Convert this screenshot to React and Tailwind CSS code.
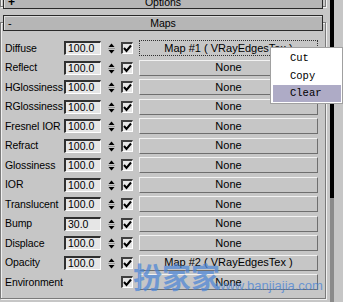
const rows = [
  { label: 'Diffuse', val: '100.0', map: 'Map #1 ( VRayEdgesTex )', focus: true },
  { label: 'Reflect', val: '100.0', map: 'None' },
  { label: 'HGlossiness', val: '100.0', map: 'None' },
  { label: 'RGlossiness', val: '100.0', map: 'None' },
  { label: 'Fresnel IOR', val: '100.0', map: 'None' },
  { label: 'Refract', val: '100.0', map: 'None' },
  { label: 'Glossiness', val: '100.0', map: 'None' },
  { label: 'IOR', val: '100.0', map: 'None' },
  { label: 'Translucent', val: '100.0', map: 'None' },
  { label: 'Bump', val: '30.0', map: 'None' },
  { label: 'Displace', val: '100.0', map: 'None' },
  { label: 'Opacity', val: '100.0', map: 'Map #2 ( VRayEdgesTex )' },
  { label: 'Environment', val: null, map: 'None' },
];

function Spinner() {
  return (
    <svg className="ml-[6px] w-[9px] h-[14px] shrink-0" viewBox="0 0 9 14">
      <path d="M1.5 6 L4.5 2.5 L7.5 6 Z" fill="#000" />
      <line x1="1" y1="7.5" x2="8" y2="7.5" stroke="#9a9a9a" strokeWidth="1" />
      <path d="M1.5 9 L7.5 9 L4.5 12.5 Z" fill="#000" />
    </svg>
  );
}

function Check() {
  return (
    <div className="ml-[5px] w-[12px] h-[12px] shrink-0 bg-[#e6e6e6] border-t-[2px] border-l-[2px] border-t-[#404040] border-l-[#404040] border-b border-r border-b-white border-r-white flex items-center justify-center">
      <svg className="w-[9px] h-[9px]" viewBox="0 0 9 9">
        <path d="M1 4 L3.5 7 L8 1.5" fill="none" stroke="#000" strokeWidth="2" />
      </svg>
    </div>
  );
}

function Row({ r }) {
  return (
    <div className="h-[19.5px] flex items-center pl-[4px]">
      <span className="w-[59px] shrink-0 text-[10.5px] tracking-[-0.1px] leading-none whitespace-nowrap">{r.label}</span>
      {r.val ? (
        <>
          <div className="w-[37px] h-[14px] shrink-0 bg-[#e6e6e6] border-t-[2px] border-l-[2px] border-t-[#303030] border-l-[#303030] border-b border-r border-b-white border-r-white pl-[2px] text-[10.5px] leading-[11px]">
            {r.val}
          </div>
          <Spinner />
        </>
      ) : (
        <div className="w-[52px] shrink-0" />
      )}
      <Check />
      <div
        className={
          r.focus
            ? 'ml-[6px] w-[179px] h-[16px] shrink-0 border border-dotted border-[#303030] bg-[#c6c6c6] flex items-center justify-center text-[11px] leading-none whitespace-nowrap'
            : 'ml-[6px] w-[179px] h-[16px] shrink-0 border border-t-[#f2f2f2] border-l-[#f2f2f2] border-b-[#6e6e6e] border-r-[#6e6e6e] bg-[#c6c6c6] flex items-center justify-center text-[11px] leading-none whitespace-nowrap'
        }
      >
        {r.map}
      </div>
    </div>
  );
}

export default function App() {
  return (
    <div className="relative w-[343px] h-[302px] overflow-hidden bg-[#c6c6c6] text-black flex" style={{ fontFamily: '"Liberation Sans", Arial, sans-serif' }}>
      <div className="w-[326px] shrink-0 flex flex-col -mt-[15px]">
        {/* Options (collapsed) */}
        <div className="h-[22px] shrink-0 border border-[#7a7a7a] shadow-[inset_1px_1px_0_#f0f0f0,1px_1px_0_#f0f0f0]">
          <div className="mt-[9px] mx-[2px] h-[14px] bg-[#b6b6b6] border border-[#2a2a2a] shadow-[inset_1px_1px_0_#dcdcdc] relative flex items-center justify-center text-[10.5px] leading-none">
            <span className="absolute left-[4px] text-[12px] font-bold">+</span>
            Options
          </div>
        </div>

        {/* Maps */}
        <div className="mt-[15px] h-[277px] shrink-0 border border-[#7a7a7a] shadow-[inset_1px_1px_0_#f0f0f0,1px_1px_0_#f0f0f0]">
          <div className="-mt-[8px] mx-[2px] h-[16px] bg-[#b6b6b6] border border-[#2a2a2a] shadow-[inset_1px_1px_0_#dcdcdc] relative flex items-center justify-center text-[10.5px] leading-none">
            <span className="absolute left-[4px] text-[11px]">-</span>
            Maps
          </div>
          <div className="mt-[7.25px] flex flex-col">
            {rows.map((r) => (
              <Row key={r.label} r={r} />
            ))}
          </div>
        </div>
      </div>

      {/* scroll indicator */}
      <div className="flex-1 pl-[4px] flex flex-col">
        <div className="w-[4px] h-[198px] bg-black" />
        <div className="w-[4px] flex-1 bg-[#8a8a8a]" />
      </div>

      {/* context menu */}
      <div className="absolute left-[270px] top-[47px] w-[73px] h-[57px] bg-white border border-[#a0a0a0] pt-[1px] pl-[2px] pr-[1px]" style={{ fontFamily: '"Liberation Mono", "Courier New", monospace' }}>
        <div className="h-[18px] pl-[17px] flex items-center text-[10.5px] leading-none">Cut</div>
        <div className="h-[18px] pl-[17px] flex items-center text-[10.5px] leading-none">Copy</div>
        <div className="h-[17px] pl-[17px] flex items-center text-[10.5px] leading-none bg-[#aeabc6]">Clear</div>
      </div>

      {/* watermark */}
      <div className="absolute left-[133px] top-[262px] text-[29px] leading-none font-bold text-[#4a84d6] opacity-70" style={{ fontFamily: '"Noto Sans CJK SC", sans-serif' }}>
        扮家家
      </div>
      <div className="absolute left-[216px] top-[279px] text-[13px] leading-none text-[#4a84d6] opacity-75">
        www.banjiajia.com
      </div>
    </div>
  );
}
